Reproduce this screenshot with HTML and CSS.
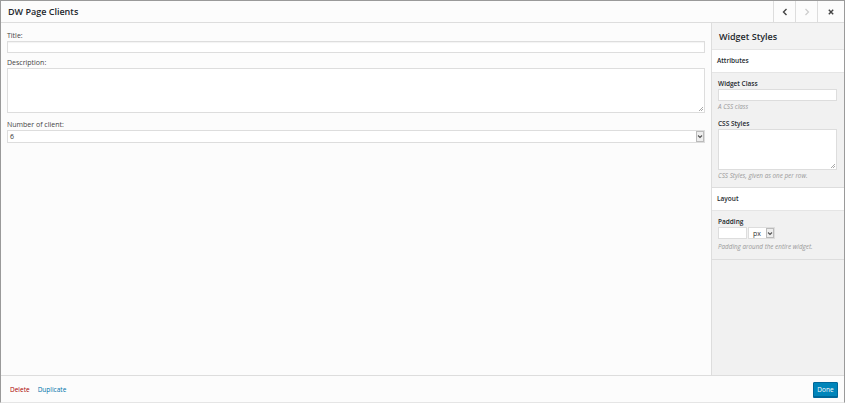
FILE: index.html
```html
<!DOCTYPE html>
<html>
<head>
<meta charset="utf-8">
<link rel="stylesheet" href="styles.css">
</head>
<body>
<div class="frame">
  <header class="topbar">
    <h1 class="title">DW Page Clients</h1>
    <div class="nav">
      <button class="navbtn"><svg width="8" height="8" viewBox="0 0 8 8"><path d="M5.5 1 L2.5 4 L5.5 7" fill="none" stroke="#444" stroke-width="1.4"/></svg></button>
      <button class="navbtn"><svg width="8" height="8" viewBox="0 0 8 8"><path d="M2.5 1 L5.5 4 L2.5 7" fill="none" stroke="#ccc" stroke-width="1.2"/></svg></button>
      <button class="navbtn close"><svg width="8" height="8" viewBox="0 0 8 8"><path d="M1.8 1.8 L6.2 6.2 M6.2 1.8 L1.8 6.2" fill="none" stroke="#444" stroke-width="1.4"/></svg></button>
    </div>
  </header>
  <div class="main">
    <section class="form">
      <label class="lbl">Title:</label>
      <div class="input"></div>
      <label class="lbl">Description:</label>
      <div class="textarea"><span class="grip"></span></div>
      <label class="lbl">Number of client:</label>
      <div class="select"><span class="val">6</span><span class="arrow"><svg width="6" height="5" viewBox="0 0 6 5"><path d="M1 1.5 L3 3.5 L5 1.5" fill="none" stroke="#555" stroke-width="1.1"/></svg></span></div>
    </section>
    <aside class="side">
      <div class="side-head">Widget Styles</div>
      <div class="sec-title">Attributes</div>
      <div class="sec-body">
        <div class="s-lbl">Widget Class</div>
        <div class="s-input"></div>
        <div class="hint">A CSS class</div>
        <div class="s-lbl mt">CSS Styles</div>
        <div class="s-textarea"><span class="grip"></span></div>
        <div class="hint">CSS Styles, given as one per row.</div>
      </div>
      <div class="sec-title">Layout</div>
      <div class="sec-body last">
        <div class="s-lbl">Padding</div>
        <div class="pad-row">
          <div class="pad-input"></div>
          <div class="unit"><span class="unit-val">px</span><span class="arrow small"><svg width="6" height="5" viewBox="0 0 6 5"><path d="M1 1.5 L3 3.5 L5 1.5" fill="none" stroke="#555" stroke-width="1.1"/></svg></span></div>
        </div>
        <div class="hint low">Padding around the entire widget.</div>
      </div>
    </aside>
  </div>
  <footer class="footer">
    <div class="links"><a class="del">Delete</a><a class="dup">Duplicate</a></div>
    <button class="done">Done</button>
  </footer>
</div>
</body>
</html>
```
FILE: styles.css
```css
* { box-sizing: border-box; }
html, body { margin: 0; padding: 0; }
body {
  font-family: "Open Sans", "Liberation Sans", sans-serif;
  font-size: 7px;
  color: #444;
  background: #fff;
}
.frame {
  width: 845px;
  height: 403px;
  border: 1px solid #9a9a9a;
  border-bottom-color: #e5e5e5;
  display: flex;
  flex-direction: column;
  background: #fcfcfc;
}
.topbar {
  height: 22px;
  flex: 0 0 22px;
  display: flex;
  align-items: stretch;
  justify-content: space-between;
  border-bottom: 1px solid #ddd;
  background: #fcfcfc;
}
.title {
  margin: 0;
  padding-left: 7px;
  font-size: 9px;
  font-weight: 600;
  color: #23282d;
  line-height: 21px;
}
.nav { display: flex; }
.navbtn {
  width: 22px;
  border: 0;
  border-left: 1px solid #ddd;
  background: #fcfcfc;
  padding: 0;
  display: flex;
  align-items: center;
  justify-content: center;
}
.navbtn.close { width: 27px; }
.main {
  flex: 1;
  display: flex;
  min-height: 0;
}
.form {
  flex: 1;
  padding: 8px 6px 0 6px;
  display: flex;
  flex-direction: column;
}
.lbl {
  display: block;
  line-height: 9px;
  color: #444;
  margin-bottom: 1px;
}
.input {
  height: 12px;
  border: 1px solid #ddd;
  background: #fff;
  box-shadow: inset 0 1px 1px rgba(0,0,0,0.05);
  margin-bottom: 5px;
}
.textarea {
  position: relative;
  height: 45px;
  border: 1px solid #ddd;
  background: #fff;
  margin-bottom: 7px;
}
.grip {
  position: absolute;
  right: 1px;
  bottom: 1px;
  width: 4px;
  height: 4px;
  background: linear-gradient(135deg, transparent 45%, #aaa 50%, transparent 60%, transparent 70%, #aaa 75%, transparent 85%);
}
.select {
  height: 13px;
  border: 1px solid #ddd;
  background: #fff;
  display: flex;
  align-items: center;
  justify-content: space-between;
  padding-left: 2px;
}
.val { color: #333; font-size: 7px; }
.arrow {
  width: 8px;
  height: 11px;
  border: 1px solid #bbb;
  background: #eee;
  display: flex;
  align-items: center;
  justify-content: center;
}
.side {
  width: 133px;
  flex: 0 0 133px;
  border-left: 1px solid #ddd;
  background: #f1f1f1;
  display: flex;
  flex-direction: column;
}
.side-head {
  height: 27px;
  padding-left: 7px;
  font-size: 9px;
  font-weight: 600;
  color: #23282d;
  line-height: 27px;
  background: #f3f3f3;
  border-bottom: 1px solid #e5e5e5;
}
.sec-title {
  height: 23px;
  background: #fff;
  padding-left: 5px;
  line-height: 22px;
  font-weight: 600;
  font-size: 6.5px;
  color: #23282d;
  border-bottom: 1px solid #e5e5e5;
}
.sec-body {
  padding: 6px 7px 7px 6px;
  border-bottom: 1px solid #ddd;
  background: #f1f1f1;
}
.sec-body.last { padding-bottom: 8px; padding-top: 6px; }
.s-lbl {
  font-weight: 600;
  font-size: 6.5px;
  color: #23282d;
  line-height: 9px;
  margin-bottom: 1px;
}
.s-lbl.mt { margin-top: 8px; }
.s-input {
  height: 12px;
  border: 1px solid #ddd;
  background: #fff;
}
.s-textarea {
  position: relative;
  height: 41px;
  border: 1px solid #ddd;
  background: #fff;
}
.hint {
  font-style: italic;
  font-size: 6.3px;
  color: #999;
  line-height: 8px;
  margin-top: 2px;
}
.hint.low { margin-top: 4px; }
.pad-row { display: flex; gap: 1px; }
.pad-input {
  width: 29px;
  height: 12px;
  border: 1px solid #ddd;
  background: #fff;
}
.unit {
  width: 27px;
  height: 12px;
  border: 1px solid #ddd;
  background: #fff;
  display: flex;
  align-items: center;
  justify-content: space-between;
  padding-left: 4px;
}
.unit-val { font-size: 7px; color: #333; }
.arrow.small { height: 10px; }
.footer {
  height: 27px;
  flex: 0 0 27px;
  border-top: 1px solid #ddd;
  background: #fcfcfc;
  display: flex;
  align-items: center;
  justify-content: space-between;
  padding: 0 6px 0 9px;
}
.links { display: flex; gap: 8px; font-size: 6.5px; }
.del { color: #a00; }
.dup { color: #0073aa; }
.done {
  height: 15px;
  width: 25px;
  padding: 0;
  border: 1px solid #006799;
  background: #0085ba;
  color: #fff;
  font-family: "Open Sans", "Liberation Sans", sans-serif;
  font-size: 6.5px;
  border-radius: 1px;
  box-shadow: 0 1px 0 #006799;
}
```
